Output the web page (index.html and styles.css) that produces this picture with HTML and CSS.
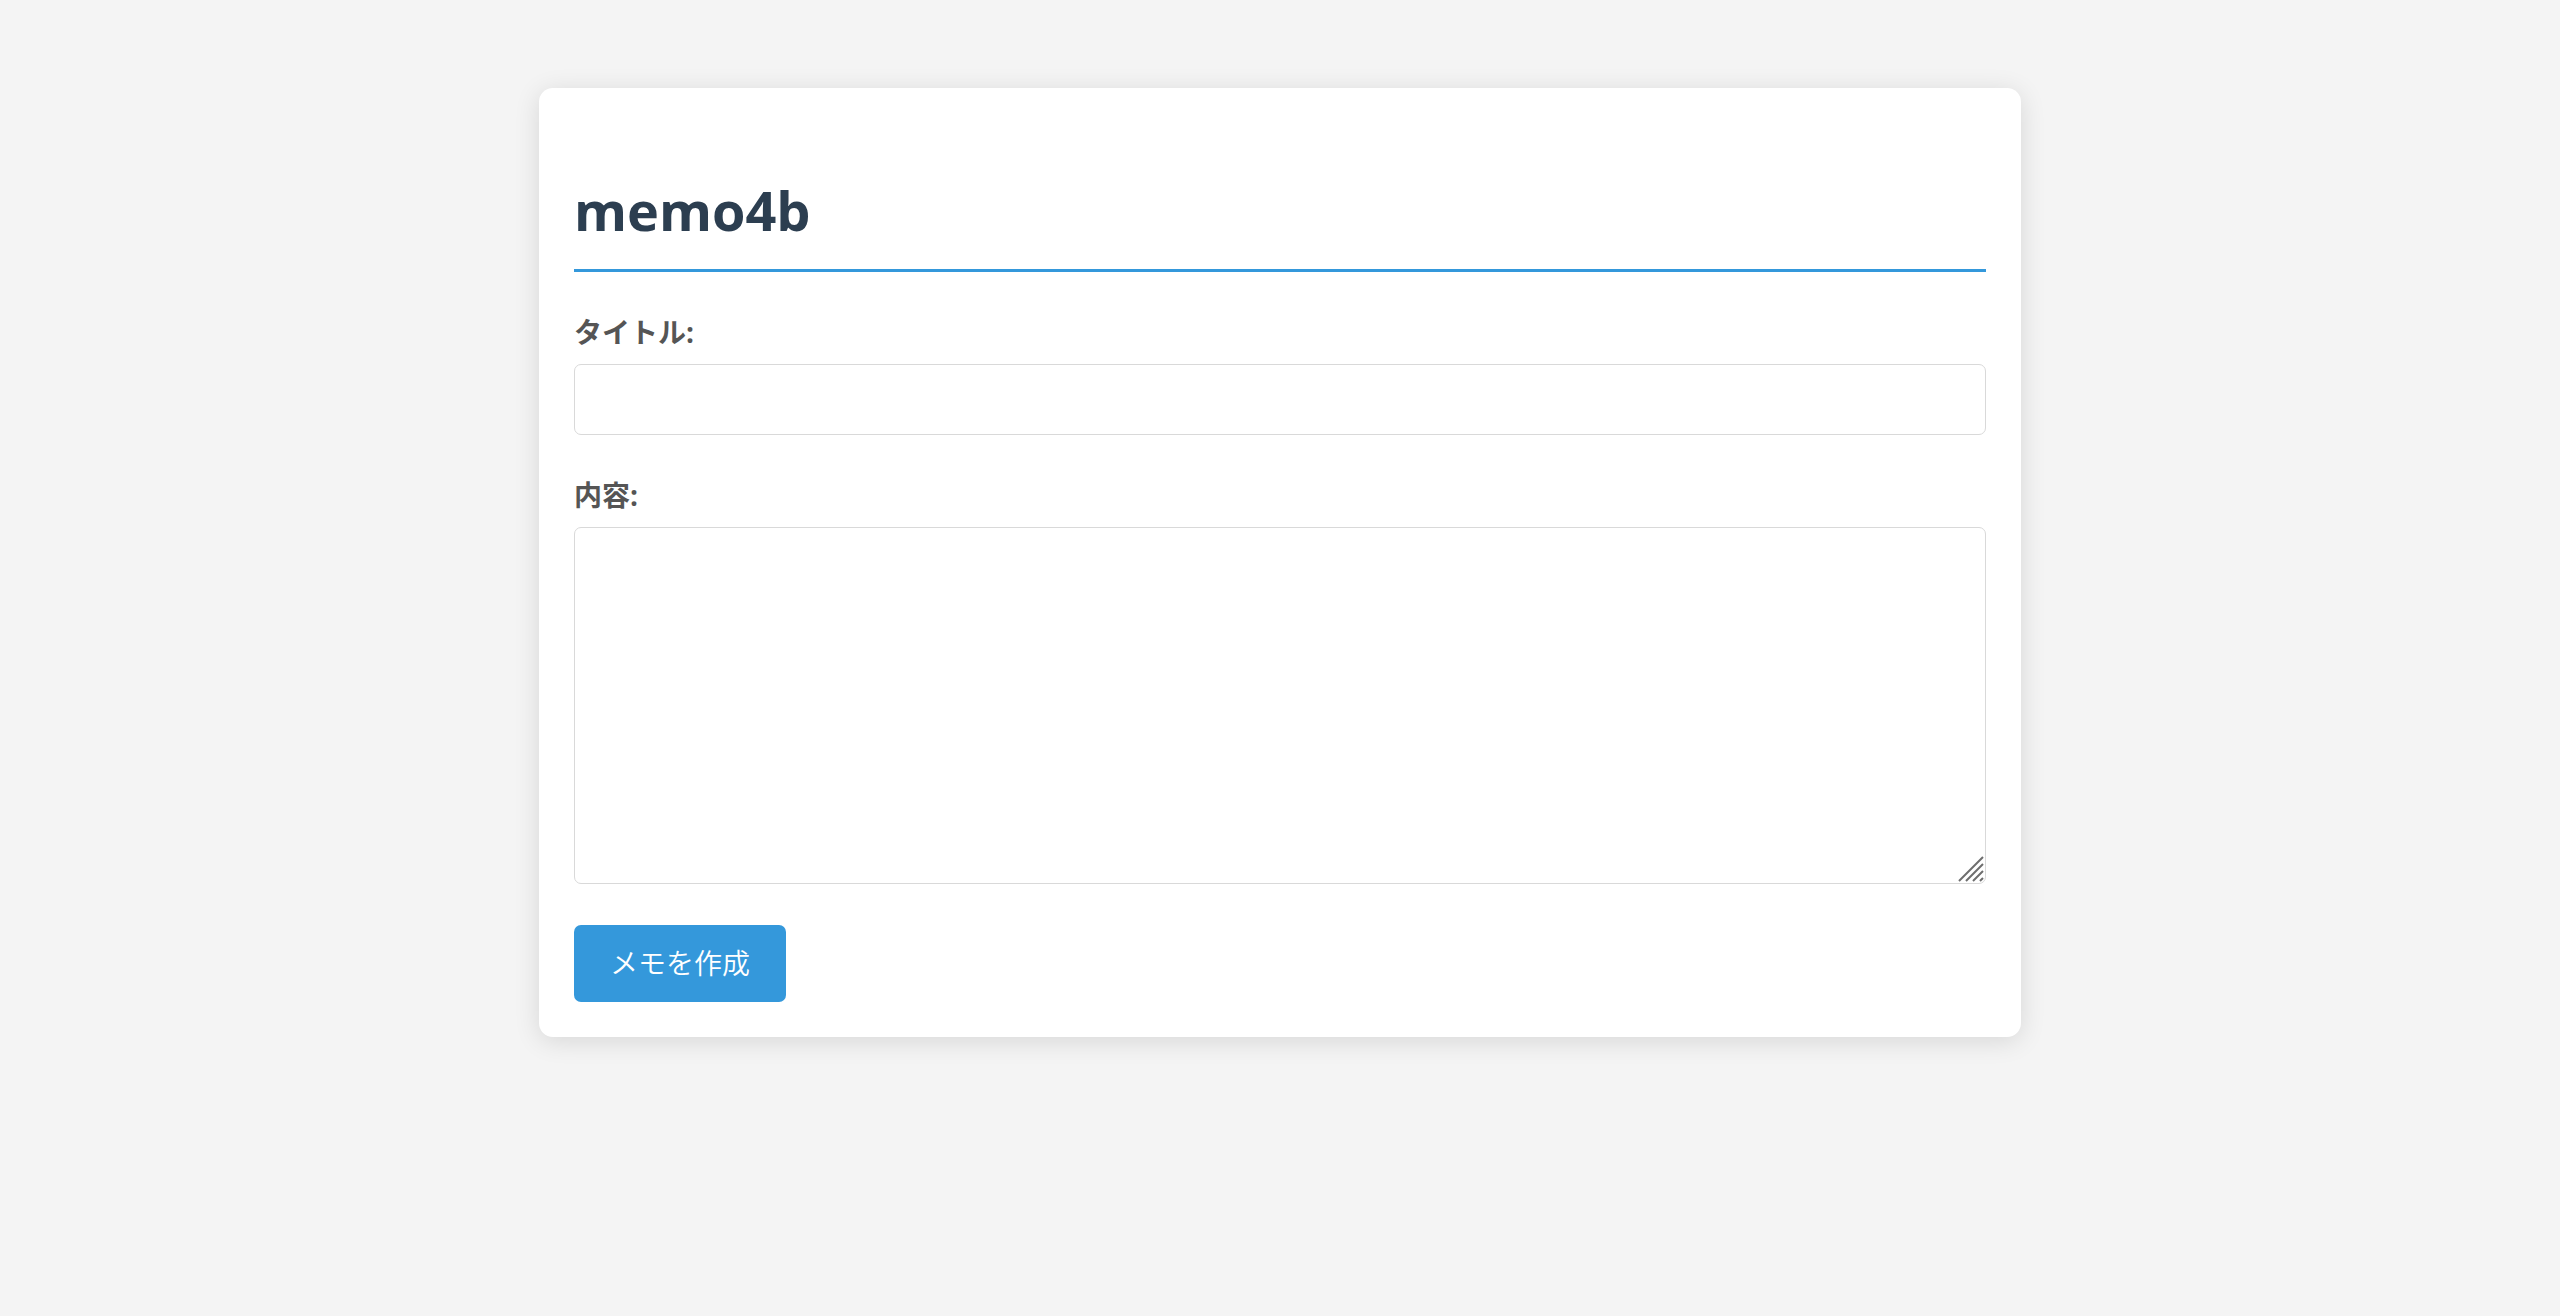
FILE: index.html
```html
<!DOCTYPE html>
<html lang="ja">
<head>
<meta charset="utf-8">
<meta name="viewport" content="width=device-width, initial-scale=1">
<title>memo4b</title>
<link rel="stylesheet" href="styles.css">
</head>
<body>
<main class="card">
  <h1 class="title">memo4b</h1>
  <form class="memo-form">
    <div class="field">
      <label class="label" for="memo-title">タイトル:</label>
      <input class="control" type="text" id="memo-title" name="title">
    </div>
    <div class="field">
      <label class="label" for="memo-content">内容:</label>
      <div class="textarea-wrap">
        <textarea class="control control-area" id="memo-content" name="content"></textarea>
        <svg class="grip" viewBox="0 0 26 26" aria-hidden="true"><path d="M1 25 25 1M8 25 25 8M15 25 25 15M22 25 25 22"/></svg>
      </div>
    </div>
    <button class="submit" type="submit">メモを作成</button>
  </form>
</main>
</body>
</html>
```
FILE: styles.css
```css
* {
  box-sizing: border-box;
}

body {
  margin: 0;
  padding: 88px 35px;
  background: #f4f4f4;
  color: #333;
  font-family: "Open Sans", "Noto Sans CJK JP", sans-serif;
  font-size: 28px;
}

.card {
  max-width: 1482px;
  margin: 0 auto;
  padding: 35px;
  background: #fff;
  border-radius: 14px;
  box-shadow: 0 4px 26px rgba(0, 0, 0, 0.12);
}

.title {
  margin: 42px 0 35px;
  padding-bottom: 14px;
  border-bottom: 3px solid #3498db;
  color: #2c3e50;
  font-size: 54px;
  font-weight: 700;
  line-height: 90px;
}

.memo-form {
  display: flex;
  flex-direction: column;
  align-items: flex-start;
}

.field {
  width: 100%;
  margin-bottom: 35px;
}

.label {
  display: block;
  margin-bottom: 7px;
  color: #555;
  font-weight: 700;
  line-height: 50px;
}

.control {
  display: block;
  width: 100%;
  height: 71px;
  padding: 17px;
  border: 1px solid #d9d9d9;
  border-radius: 7px;
  background: #fff;
  color: #333;
  font: inherit;
}

.textarea-wrap {
  position: relative;
  margin-bottom: 41px;
}

.field:last-of-type {
  margin-bottom: 0;
}

.control-area {
  height: 357px;
  resize: none;
}

.grip {
  position: absolute;
  right: 2px;
  bottom: 2px;
  width: 26px;
  height: 26px;
  fill: none;
  stroke: #6e6e6e;
  stroke-width: 2;
}

.submit {
  height: 77px;
  padding: 0 36px 3px;
  border: 0;
  border-radius: 7px;
  background: #3498db;
  color: #fff;
  font: inherit;
  font-weight: 350;
}
```
